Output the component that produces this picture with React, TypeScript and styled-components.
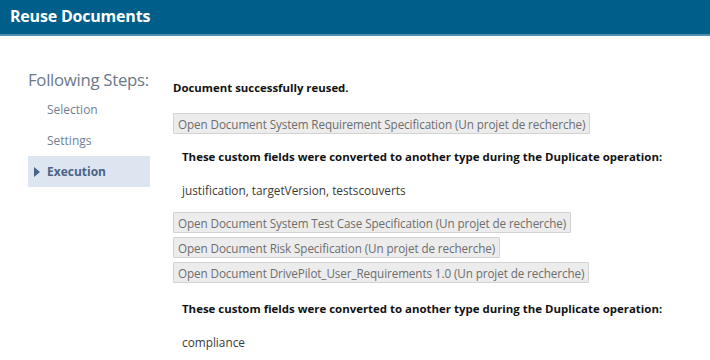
import React from "react";
import styled, { createGlobalStyle } from "styled-components";

const Global = createGlobalStyle`
  html, body { margin: 0; padding: 0; background: #fff; }
  body { font-family: "Open Sans", "Noto Sans", sans-serif; }
`;

const Page = styled.div`
  width: 710px;
  height: 360px;
  overflow: hidden;
  background: #fff;
`;

const Header = styled.header`
  height: 36px;
  background: #005f8a;
  border-bottom: 2px solid #4b8fb4;
  box-sizing: border-box;
  display: flex;
  align-items: center;
  padding: 0 10px 3px;
  color: #fff;
  font-size: 16px;
  font-weight: 700;
  letter-spacing: -0.2px;
`;

const Body = styled.div`
  display: flex;
  padding-top: 32px;
`;

const Sidebar = styled.nav`
  width: 122px;
  margin-left: 28px;
  flex-shrink: 0;
`;

const SideTitle = styled.div`
  font-size: 16.8px;
  color: #6b7888;
  letter-spacing: -0.3px;
  line-height: 24px;
  white-space: nowrap;
  margin-bottom: 2px;
`;

const Step = styled.div<{ $active?: boolean }>`
  height: 31px;
  display: flex;
  align-items: center;
  padding-left: ${(p) => (p.$active ? "6px" : "19px")};
  gap: 7px;
  font-size: 12px;
  color: ${(p) => (p.$active ? "#4a6387" : "#6f8196")};
  font-weight: ${(p) => (p.$active ? 700 : 400)};
  background: ${(p) => (p.$active ? "#dde5f0" : "transparent")};
`;

const Arrow = styled.span`
  width: 0;
  height: 0;
  border-top: 5px solid transparent;
  border-bottom: 5px solid transparent;
  border-left: 6px solid #4a6387;
`;

const Main = styled.main`
  margin-left: 23px;
  padding-top: 11px;
  display: flex;
  flex-direction: column;
  align-items: flex-start;
`;

const Success = styled.div`
  font-size: 11.4px;
  font-weight: 700;
  color: #111;
  line-height: 17px;
  margin-bottom: 17px;
`;

const DocButton = styled.button`
  font-family: inherit;
  font-size: 11.7px;
  color: #6e6e6e;
  background: #ececec;
  border: 1px solid #d3d3d3;
  border-radius: 1px;
  height: 21px;
  padding: 0 4px;
  margin-bottom: 4px;
  letter-spacing: -0.1px;
`;

const Notice = styled.div<{ $last?: boolean }>`
  margin-left: 9px;
  margin-top: ${(p) => (p.$last ? "13px" : "10px")};
  margin-bottom: 13px;
`;

const NoticeTitle = styled.div`
  font-size: 11.45px;
  font-weight: 700;
  color: #111;
  line-height: 17px;
  margin-bottom: 17px;
`;

const Fields = styled.div`
  font-size: 11.8px;
  color: #3a3a3a;
  line-height: 17px;
`;

export default function App() {
  return (
    <Page>
      <Global />
      <Header>Reuse Documents</Header>
      <Body>
        <Sidebar>
          <SideTitle>Following Steps:</SideTitle>
          <Step>Selection</Step>
          <Step>Settings</Step>
          <Step $active>
            <Arrow />
            Execution
          </Step>
        </Sidebar>
        <Main>
          <Success>Document successfully reused.</Success>
          <DocButton>Open Document System Requirement Specification (Un projet de recherche)</DocButton>
          <Notice>
            <NoticeTitle>These custom fields were converted to another type during the Duplicate operation:</NoticeTitle>
            <Fields>justification, targetVersion, testscouverts</Fields>
          </Notice>
          <DocButton>Open Document System Test Case Specification (Un projet de recherche)</DocButton>
          <DocButton>Open Document Risk Specification (Un projet de recherche)</DocButton>
          <DocButton>Open Document DrivePilot_User_Requirements 1.0 (Un projet de recherche)</DocButton>
          <Notice $last>
            <NoticeTitle>These custom fields were converted to another type during the Duplicate operation:</NoticeTitle>
            <Fields>compliance</Fields>
          </Notice>
        </Main>
      </Body>
    </Page>
  );
}
